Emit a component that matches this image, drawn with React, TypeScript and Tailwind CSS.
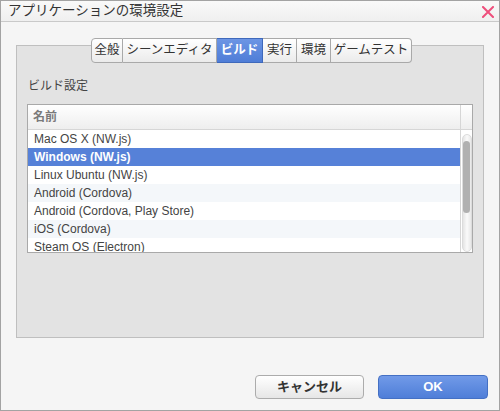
import React from "react";

const font = { fontFamily: '"Liberation Sans", "Noto Sans CJK JP", sans-serif' };

const tabs = [
  { label: "全般", w: 32 },
  { label: "シーンエディタ", w: 94 },
  { label: "ビルド", w: 46, active: true },
  { label: "実行", w: 34 },
  { label: "環境", w: 34 },
  { label: "ゲームテスト", w: 81 },
];

const rows = [
  "Mac OS X (NW.js)",
  "Windows (NW.js)",
  "Linux Ubuntu (NW.js)",
  "Android (Cordova)",
  "Android (Cordova, Play Store)",
  "iOS (Cordova)",
  "Steam OS (Electron)",
];

export default function App() {
  return (
    <div
      className="w-[500px] h-[411px] border border-[#a3a3a3] bg-[#f5f5f5] flex flex-col text-[#333]"
      style={font}
    >
      {/* Title bar */}
      <div className="h-[21px] border-b border-[#c9c9c9] bg-gradient-to-b from-[#f9f9f9] to-[#efefef] flex items-center justify-between pl-[7px] pr-[5px]">
        <span className="text-[13.5px] leading-none text-[#333]">アプリケーションの環境設定</span>
        <svg width="12" height="12" viewBox="0 0 12 12" className="mt-[1px]">
          <path d="M1 1 L11 11 M11 1 L1 11" stroke="#ee4f7c" strokeWidth="2" strokeLinecap="square" />
        </svg>
      </div>

      {/* Body */}
      <div className="pt-[16px] px-[15px] flex flex-col">
        {/* Tabs */}
        <div className="relative z-10 flex ml-[75px] h-[25px]">
          {tabs.map((t, i) => (
            <div
              key={t.label}
              style={{ width: t.w }}
              className={
                "h-[25px] flex items-center justify-center text-[12.5px] leading-none border-y " +
                (i === 0 ? "border-l rounded-l-[4px] " : "") +
                (i === tabs.length - 1 ? "border-r rounded-r-[4px] " : "border-r ") +
                (t.active
                  ? "bg-gradient-to-b from-[#6c95e4] to-[#4f7dd7] text-white font-bold border-[#3f69bb]"
                  : "bg-gradient-to-b from-[#ffffff] to-[#ebebeb] text-[#333] border-[#a9a9a9]")
              }
            >
              {t.label}
            </div>
          ))}
        </div>

        {/* Panel */}
        <div className="-mt-[18px] h-[293px] border border-[#bfbfbf] bg-[#e3e3e3] px-[10px] pt-[33px]">
          <div className="text-[12px] leading-[14px] text-[#444] pl-[1px]">ビルド設定</div>
          <div className="mt-[11px] border border-[#a9a9a9] bg-white flex flex-col">
            {/* Header */}
            <div className="h-[25px] flex border-b border-[#d6d6d6] bg-gradient-to-b from-[#ffffff] to-[#eeeeee]">
              <div className="flex-1 flex items-center pl-[5px] text-[12px] font-bold text-[#7a7a7a]">名前</div>
              <div className="w-[12px] border-l border-[#d6d6d6]" />
            </div>
            {/* Body rows + scrollbar */}
            <div className="h-[122px] flex overflow-hidden">
              <div className="flex-1 flex flex-col">
                {rows.map((r, i) => (
                  <div
                    key={r}
                    className={
                      "h-[18px] shrink-0 flex items-center pl-[6px] text-[12px] leading-none " +
                      (i === 1
                        ? "bg-[#5681d8] text-white font-bold"
                        : i % 2 === 1
                        ? "bg-[#f4f7fa] text-[#444]"
                        : "bg-white text-[#444]")
                    }
                  >
                    {r}
                  </div>
                ))}
              </div>
              <div className="w-[12px] border-l border-[#d6d6d6] bg-white pt-[4px] flex justify-center">
                <div className="w-[10px] h-[118px] rounded-[5px] bg-gradient-to-r from-[#e4e4e4] via-[#fafafa] to-[#e8e8e8] border border-[#dcdcdc] pt-[6px] flex justify-center">
                  <div className="w-[7px] h-[72px] rounded-[4px] bg-[#b0b0b0]" />
                </div>
              </div>
            </div>
          </div>
        </div>

        {/* Buttons */}
        <div className="mt-[37px] flex justify-end gap-[14px] -mr-[4px]">
          <div className="w-[109px] h-[24px] rounded-[4px] border border-[#acacac] bg-gradient-to-b from-[#ffffff] to-[#e6e6e6] flex items-center justify-center text-[13px] font-bold text-[#333]">
            キャンセル
          </div>
          <div className="w-[110px] h-[24px] rounded-[4px] border border-[#4470c4] bg-gradient-to-b from-[#719ae8] to-[#4f7ed8] flex items-center justify-center text-[13px] font-bold text-white">
            OK
          </div>
        </div>
      </div>
    </div>
  );
}
